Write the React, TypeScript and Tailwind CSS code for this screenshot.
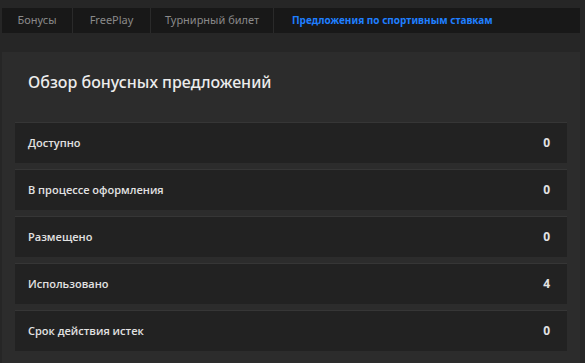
import React from "react";

const tabs = [
  { label: "Бонусы", w: "w-[71px]" },
  { label: "FreePlay", w: "w-[78px]" },
  { label: "Турнирный билет", w: "w-[123px]" },
];

const rows = [
  { label: "Доступно", value: "0" },
  { label: "В процессе оформления", value: "0" },
  { label: "Размещено", value: "0" },
  { label: "Использовано", value: "4" },
  { label: "Срок действия истек", value: "0" },
];

export default function App() {
  return (
    <div className="w-[585px] h-[363px] overflow-hidden bg-[#262626] pt-2 pl-[2px] pr-[5px]">
      {/* Tabs */}
      <div className="flex h-[25px] bg-[#181818] font-['Noto_Sans',sans-serif] text-[11px]">
        {tabs.map(t => (
          <div
            key={t.label}
            className={`${t.w} flex items-center justify-center border-r border-[#2a2a2a] text-[#8a8a8a]`}
          >
            {t.label}
          </div>
        ))}
        <div className="flex-1 flex items-center pl-[18px] text-[10px] font-bold text-[#1f7fff]">
          Предложения по спортивным ставкам
        </div>
      </div>

      {/* Panel */}
      <div className="mt-[19px] h-[400px] bg-[#2c2c2c] px-[13px] pt-[16px]">
        <h1 className="pl-[13px] h-[28px] leading-[28px] text-[16px] font-medium text-[#ececec] font-['Noto_Sans',sans-serif]">
          Обзор бонусных предложений
        </h1>
        <div className="mt-[27px] flex flex-col gap-[7px]">
          {rows.map(r => (
            <div
              key={r.label}
              className="h-[40px] flex items-center justify-between bg-[#222222] shadow-[0_-1px_0_#363636] pl-[13px] pr-[17px] font-['Open_Sans',sans-serif] text-[11px] font-semibold text-[#e2e2e2]"
            >
              <span>{r.label}</span>
              <span className="font-bold text-[12px]">{r.value}</span>
            </div>
          ))}
        </div>
      </div>
    </div>
  );
}
